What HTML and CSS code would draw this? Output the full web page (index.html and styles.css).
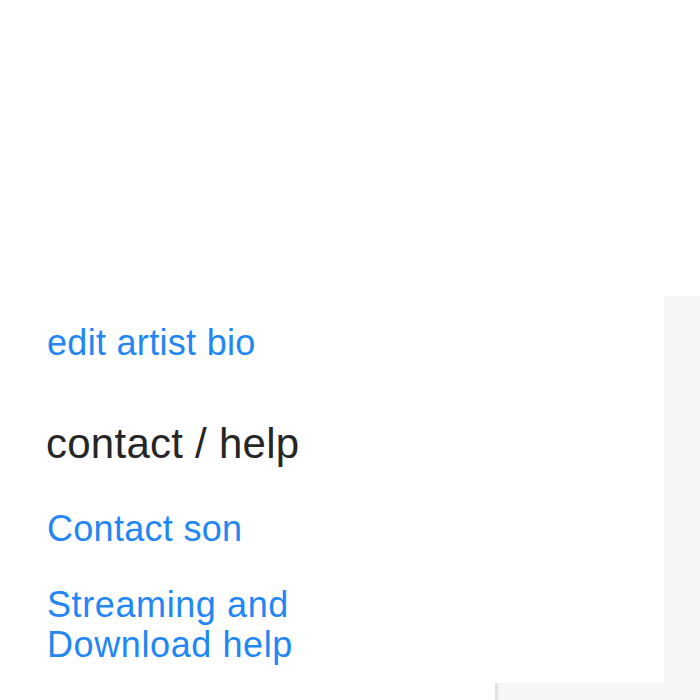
FILE: index.html
```html
<!DOCTYPE html>
<html>
<head>
<meta charset="utf-8">
<link rel="stylesheet" href="styles.css">
</head>
<body>
<div class="top"></div>
<div class="main">
  <div class="card">
    <a class="link bio" href="#">edit artist bio</a>
    <h2 class="heading">contact / help</h2>
    <a class="link contact" href="#">Contact son</a>
    <a class="link help" href="#">Streaming and<br>Download help</a>
  </div>
  <div class="side"></div>
</div>
<div class="bottom">
  <div class="bottom-left"></div>
  <div class="bottom-right"></div>
</div>
</body>
</html>
```
FILE: styles.css
```css
html, body {
  margin: 0;
  padding: 0;
  background: #ffffff;
  font-family: "Liberation Sans", Arial, sans-serif;
  overflow: hidden;
}
.top {
  height: 296px;
  background: #ffffff;
}
.main {
  display: flex;
  height: 387px;
}
.card {
  width: 664px;
  background: #ffffff;
  box-sizing: border-box;
  padding: 27px 0 0 47px;
  display: flex;
  flex-direction: column;
  align-items: flex-start;
}
.side {
  flex: 1;
  background: #f6f6f6;
}
.link {
  color: #2286f5;
  text-decoration: none;
  font-size: 36px;
  line-height: 40px;
  letter-spacing: 0.3px;
}
.heading {
  margin: 57px 0 0 -1px;
  font-size: 42px;
  line-height: 48px;
  font-weight: normal;
  color: #262626;
  letter-spacing: 0.25px;
}
.contact {
  margin-top: 41px;
}
.help {
  margin-top: 36px;
  letter-spacing: 0.6px;
}
.bottom {
  display: flex;
  height: 17px;
}
.bottom-left {
  width: 495px;
  background: #ffffff;
  border-right: 3px solid #e2e2e2;
}
.bottom-right {
  flex: 1;
  background: #f6f6f6;
}
```
